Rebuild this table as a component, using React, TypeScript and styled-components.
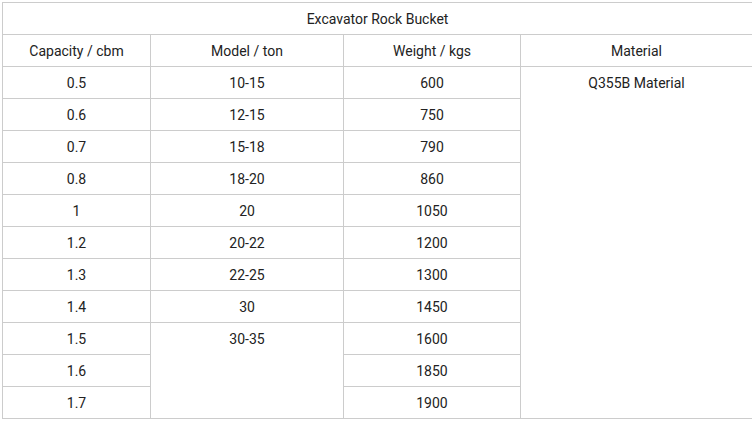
import styled, { createGlobalStyle } from 'styled-components';

const GlobalStyle = createGlobalStyle`
    body {
        margin: 0;
        background: #fff;
    }
`;

const Wrap = styled.div`
    padding: 2px 0 0 2px;
`;

const Table = styled.table`
    width: 750px;
    border-collapse: collapse;
    table-layout: fixed;
    font-family: Roboto, 'Liberation Sans', sans-serif;
    font-size: 14px;
    color: #222;
`;

const Cell = styled.td<{ $top?: boolean }>`
    border: 1px solid #cccccc;
    padding: 1px 0 0;
    height: 30px;
    line-height: 30px;
    text-align: center;
    vertical-align: ${(p) => (p.$top ? 'top' : 'middle')};
`;

const rows = [
    { cap: '0.5', model: '10-15', weight: '600' },
    { cap: '0.6', model: '12-15', weight: '750' },
    { cap: '0.7', model: '15-18', weight: '790' },
    { cap: '0.8', model: '18-20', weight: '860' },
    { cap: '1', model: '20', weight: '1050' },
    { cap: '1.2', model: '20-22', weight: '1200' },
    { cap: '1.3', model: '22-25', weight: '1300' },
    { cap: '1.4', model: '30', weight: '1450' },
    { cap: '1.5', model: '30-35', weight: '1600' },
    { cap: '1.6', model: null, weight: '1850' },
    { cap: '1.7', model: null, weight: '1900' },
];

export default function App() {
    return (
        <>
            <GlobalStyle />
            <Wrap>
                <Table>
                    <colgroup>
                        <col style={{ width: 148 }} />
                        <col style={{ width: 193 }} />
                        <col style={{ width: 177 }} />
                        <col style={{ width: 232 }} />
                    </colgroup>
                    <tbody>
                        <tr>
                            <Cell colSpan={4}>Excavator Rock Bucket</Cell>
                        </tr>
                        <tr>
                            <Cell>Capacity / cbm</Cell>
                            <Cell>Model / ton</Cell>
                            <Cell>Weight / kgs</Cell>
                            <Cell>Material</Cell>
                        </tr>
                        {rows.map((r, i) => (
                            <tr key={r.cap}>
                                <Cell>{r.cap}</Cell>
                                {r.model !== null && (
                                    <Cell
                                        $top={i === 8}
                                        rowSpan={i === 8 ? 3 : 1}
                                    >
                                        {r.model}
                                    </Cell>
                                )}
                                <Cell>{r.weight}</Cell>
                                {i === 0 && (
                                    <Cell $top rowSpan={11}>
                                        Q355B Material
                                    </Cell>
                                )}
                            </tr>
                        ))}
                    </tbody>
                </Table>
            </Wrap>
        </>
    );
}
